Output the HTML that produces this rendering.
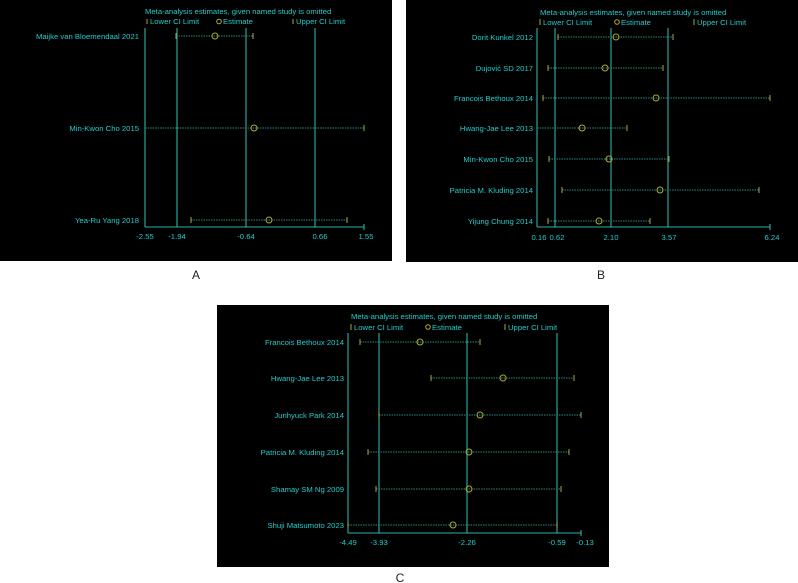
<!DOCTYPE html>
<html><head><meta charset="utf-8"><style>
html,body{margin:0;padding:0;background:#fff;width:798px;height:583px;overflow:hidden}
svg{display:block}
text{font-family:"Liberation Sans",sans-serif}
.t{fill:#22cccc;font-size:7.7px}
.l{fill:#22cccc;font-size:7.7px;text-anchor:end}
.a{fill:#22cccc;font-size:7.7px;text-anchor:middle}
.v{stroke:#30b0a8;stroke-width:1.1}
.ci{stroke:#2a8a80;stroke-width:0.9;stroke-dasharray:1.5 1}
.tk{stroke:#a8a840;stroke-width:1}
.e{fill:none;stroke:#b0a830;stroke-width:1}
.lab{font-size:12px;fill:#222;text-anchor:middle}
</style></head><body>
<svg width="798" height="583" xmlns="http://www.w3.org/2000/svg">
<!-- Panel A -->
<rect x="0" y="0" width="392" height="261" fill="#000"/>
<text class="t" x="145" y="14">Meta-analysis estimates, given named study is omitted</text>
<line class="tk" x1="147" y1="19" x2="147" y2="24"/><text class="t" x="150" y="24">Lower CI Limit</text>
<circle class="e" cx="219" cy="21.5" r="2.3"/><text class="t" x="223" y="24">Estimate</text>
<line class="tk" x1="293" y1="19" x2="293" y2="24"/><text class="t" x="296" y="24">Upper CI Limit</text>
<line class="v" x1="145" y1="28" x2="145" y2="227"/>
<line class="v" x1="177" y1="28" x2="177" y2="227"/>
<line class="v" x1="246" y1="28" x2="246" y2="227"/>
<line class="v" x1="315" y1="28" x2="315" y2="227"/>
<line class="v" x1="145" y1="227" x2="364" y2="227"/>
<line class="v" x1="364" y1="224" x2="364" y2="230"/>
<text class="a" x="145" y="239">-2.55</text><text class="a" x="177" y="239">-1.94</text><text class="a" x="246" y="239">-0.64</text><text class="a" x="320" y="239">0.66</text><text class="a" x="366" y="239">1.55</text>
<text class="l" x="139" y="39">Maijke van Bloemendaal 2021</text>
<line class="ci" x1="176" y1="36" x2="253" y2="36"/><line class="tk" x1="176" y1="33" x2="176" y2="39"/><line class="tk" x1="253" y1="33" x2="253" y2="39"/><circle class="e" cx="215" cy="36" r="3"/>
<text class="l" x="139" y="131">Min-Kwon Cho 2015</text>
<line class="ci" x1="145" y1="128" x2="364" y2="128"/><line class="tk" x1="364" y1="125" x2="364" y2="131"/><circle class="e" cx="254" cy="128" r="3"/>
<text class="l" x="139" y="223">Yea-Ru Yang 2018</text>
<line class="ci" x1="191" y1="220" x2="347" y2="220"/><line class="tk" x1="191" y1="217" x2="191" y2="223"/><line class="tk" x1="347" y1="217" x2="347" y2="223"/><circle class="e" cx="269" cy="220" r="3"/>
<text class="lab" x="196" y="279">A</text>

<!-- Panel B -->
<rect x="406" y="0" width="392" height="262" fill="#000"/>
<text class="t" x="540" y="15">Meta-analysis estimates, given named study is omitted</text>
<line class="tk" x1="540" y1="19" x2="540" y2="25"/><text class="t" x="543" y="25">Lower CI Limit</text>
<circle class="e" cx="617" cy="22" r="2.3"/><text class="t" x="621" y="25">Estimate</text>
<line class="tk" x1="694" y1="19" x2="694" y2="25"/><text class="t" x="697" y="25">Upper CI Limit</text>
<line class="v" x1="537" y1="28" x2="537" y2="227"/>
<line class="v" x1="555" y1="28" x2="555" y2="227"/>
<line class="v" x1="611" y1="28" x2="611" y2="227"/>
<line class="v" x1="668" y1="28" x2="668" y2="227"/>
<line class="v" x1="537" y1="227" x2="770" y2="227"/>
<line class="v" x1="770" y1="224" x2="770" y2="230"/>
<text class="a" x="539" y="240">0.16</text><text class="a" x="557" y="240">0.62</text><text class="a" x="611" y="240">2.10</text><text class="a" x="669" y="240">3.57</text><text class="a" x="772" y="240">6.24</text>
<g>
<text class="l" x="533" y="40">Dorit Kunkel 2012</text>
<line class="ci" x1="558" y1="37" x2="673" y2="37"/><line class="tk" x1="558" y1="34" x2="558" y2="40"/><line class="tk" x1="673" y1="34" x2="673" y2="40"/><circle class="e" cx="616" cy="37" r="3"/>
<text class="l" x="533" y="71">Dujović SD 2017</text>
<line class="ci" x1="548" y1="68" x2="663" y2="68"/><line class="tk" x1="548" y1="65" x2="548" y2="71"/><line class="tk" x1="663" y1="65" x2="663" y2="71"/><circle class="e" cx="605" cy="68" r="3"/>
<text class="l" x="533" y="101">Francois Bethoux 2014</text>
<line class="ci" x1="543" y1="98" x2="770" y2="98"/><line class="tk" x1="543" y1="95" x2="543" y2="101"/><line class="tk" x1="770" y1="95" x2="770" y2="101"/><circle class="e" cx="656" cy="98" r="3"/>
<text class="l" x="533" y="131">Hwang-Jae Lee 2013</text>
<line class="ci" x1="537" y1="128" x2="627" y2="128"/><line class="tk" x1="627" y1="125" x2="627" y2="131"/><circle class="e" cx="582" cy="128" r="3"/>
<text class="l" x="533" y="162">Min-Kwon Cho 2015</text>
<line class="ci" x1="549" y1="159" x2="669" y2="159"/><line class="tk" x1="549" y1="156" x2="549" y2="162"/><line class="tk" x1="669" y1="156" x2="669" y2="162"/><circle class="e" cx="609" cy="159" r="3"/>
<text class="l" x="533" y="193">Patricia M. Kluding 2014</text>
<line class="ci" x1="562" y1="190" x2="759" y2="190"/><line class="tk" x1="562" y1="187" x2="562" y2="193"/><line class="tk" x1="759" y1="187" x2="759" y2="193"/><circle class="e" cx="660" cy="190" r="3"/>
<text class="l" x="533" y="224">Yijung Chung 2014</text>
<line class="ci" x1="548" y1="221" x2="650" y2="221"/><line class="tk" x1="548" y1="218" x2="548" y2="224"/><line class="tk" x1="650" y1="218" x2="650" y2="224"/><circle class="e" cx="599" cy="221" r="3"/>
</g>
<text class="lab" x="601" y="279">B</text>

<!-- Panel C -->
<rect x="217" y="305" width="392" height="262" fill="#000"/>
<text class="t" x="351" y="319">Meta-analysis estimates, given named study is omitted</text>
<line class="tk" x1="351" y1="324" x2="351" y2="330"/><text class="t" x="354" y="330">Lower CI Limit</text>
<circle class="e" cx="428" cy="327" r="2.3"/><text class="t" x="432" y="330">Estimate</text>
<line class="tk" x1="505" y1="324" x2="505" y2="330"/><text class="t" x="508" y="330">Upper CI Limit</text>
<line class="v" x1="348" y1="333" x2="348" y2="533"/>
<line class="v" x1="379" y1="333" x2="379" y2="533"/>
<line class="v" x1="467" y1="333" x2="467" y2="533"/>
<line class="v" x1="557" y1="333" x2="557" y2="533"/>
<line class="v" x1="348" y1="533" x2="581" y2="533"/>
<line class="v" x1="581" y1="530" x2="581" y2="536"/>
<text class="a" x="348" y="545">-4.49</text><text class="a" x="379" y="545">-3.93</text><text class="a" x="467" y="545">-2.26</text><text class="a" x="557" y="545">-0.59</text><text class="a" x="585" y="545">-0.13</text>
<text class="l" x="344" y="345">Francois Bethoux 2014</text>
<line class="ci" x1="360" y1="342" x2="480" y2="342"/><line class="tk" x1="360" y1="339" x2="360" y2="345"/><line class="tk" x1="480" y1="339" x2="480" y2="345"/><circle class="e" cx="420" cy="342" r="3"/>
<text class="l" x="344" y="381">Hwang-Jae Lee 2013</text>
<line class="ci" x1="431" y1="378" x2="574" y2="378"/><line class="tk" x1="431" y1="375" x2="431" y2="381"/><line class="tk" x1="574" y1="375" x2="574" y2="381"/><circle class="e" cx="503" cy="378" r="3"/>
<text class="l" x="344" y="418">Junhyuck Park 2014</text>
<line class="ci" x1="379" y1="415" x2="581" y2="415"/><line class="tk" x1="379" y1="412" x2="379" y2="418"/><line class="tk" x1="581" y1="412" x2="581" y2="418"/><circle class="e" cx="480" cy="415" r="3"/>
<text class="l" x="344" y="455">Patricia M. Kluding 2014</text>
<line class="ci" x1="368" y1="452" x2="569" y2="452"/><line class="tk" x1="368" y1="449" x2="368" y2="455"/><line class="tk" x1="569" y1="449" x2="569" y2="455"/><circle class="e" cx="469" cy="452" r="3"/>
<text class="l" x="344" y="492">Shamay SM Ng 2009</text>
<line class="ci" x1="376" y1="489" x2="561" y2="489"/><line class="tk" x1="376" y1="486" x2="376" y2="492"/><line class="tk" x1="561" y1="486" x2="561" y2="492"/><circle class="e" cx="469" cy="489" r="3"/>
<text class="l" x="344" y="528">Shuji Matsumoto 2023</text>
<line class="ci" x1="348" y1="525" x2="557" y2="525"/><line class="tk" x1="348" y1="522" x2="348" y2="528"/><line class="tk" x1="557" y1="522" x2="557" y2="528"/><circle class="e" cx="453" cy="525" r="3"/>
<text class="lab" x="400" y="582">C</text>
</svg>
</body></html>
